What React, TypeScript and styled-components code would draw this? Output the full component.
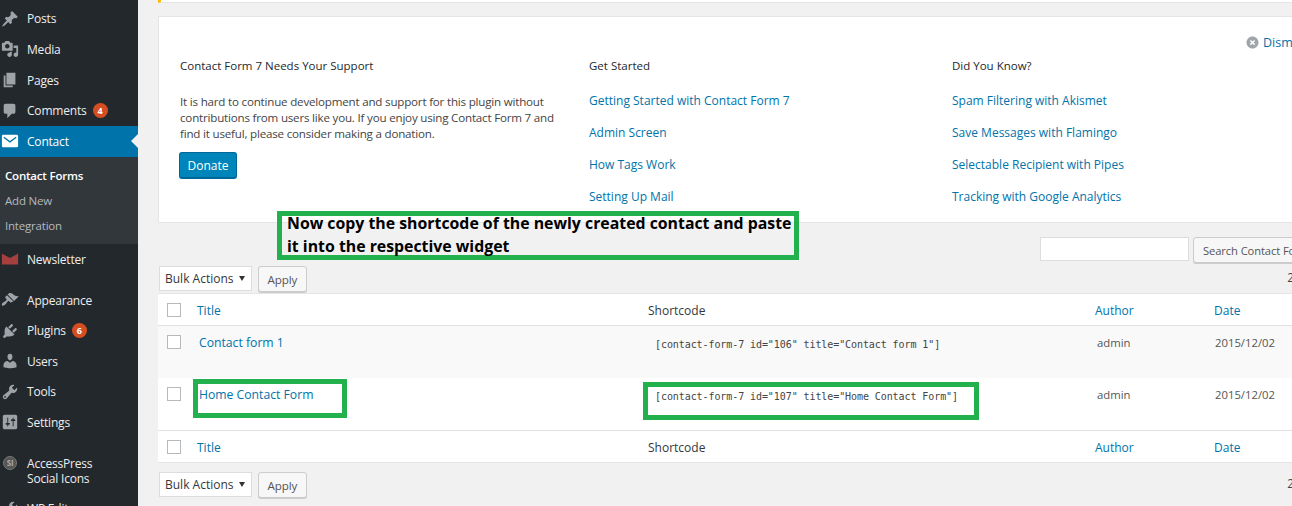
import styled, { createGlobalStyle } from "styled-components";

const ICONS: Record<string, string> = {
  posts:
    "M10.44 3.02l1.82-1.82 6.36 6.35-1.83 1.82c-1.05-.68-2.48-.57-3.41.36l-.75.75c-.92.93-1.04 2.35-.35 3.41l-1.83 1.82-2.41-2.41-2.8 2.79c-.42.42-3.38 2.71-3.8 2.29s1.86-3.39 2.28-3.81l2.79-2.79L4.1 9.36l1.83-1.82c1.05.69 2.48.57 3.4-.36l.75-.75c.93-.92 1.05-2.35.36-3.41z",
  media:
    "M13 11V4c0-.55-.45-1-1-1h-1.67L9 1H5L3.67 3H2c-.55 0-1 .45-1 1v7c0 .55.45 1 1 1h10c.55 0 1-.45 1-1zM7 4.5c1.38 0 2.5 1.12 2.5 2.5S8.38 9.5 7 9.5 4.5 8.38 4.5 7 5.62 4.5 7 4.5zM14 6h5v10.5c0 1.38-1.12 2.5-2.5 2.5S14 17.88 14 16.5s1.12-2.5 2.5-2.5c.17 0 .34.02.5.05V9h-3V6zm-4 8.05V13h2v3.5c0 1.38-1.12 2.5-2.5 2.5S7 17.88 7 16.5 8.12 14 9.5 14c.17 0 .34.02.5.05z",
  pages: "M6 15V2h10v13H6zm-1 1h8v2H3V5h2v11z",
  comments:
    "M5 2h9c1.1 0 2 .9 2 2v7c0 1.1-.9 2-2 2h-2l-5 5v-5H5c-1.1 0-2-.9-2-2V4c0-1.1.9-2 2-2z",
  contact:
    "M2.5 3h15c.8 0 1.5.7 1.5 1.5v11c0 .8-.7 1.5-1.5 1.5h-15C1.700 17 1 16.300 1 15.500v-11C1 3.700 1.700 3 2.500 3zM3.600 5.200L2.700 6.300 10 11.900l7.300-5.600-.9-1.100L10 10z",
  newsletter: "M1 4l9 5 9-5v12H1z",
  appearance:
    "M14.48 11.06L7.41 3.99l1.5-1.5c.5-.56 2.3-.47 3.51.32 1.21.8 1.43 1.28 2.91 2.1 1.18.64 2.45 1.26 4.45.85zm-.71.71L6.7 4.7 4.93 6.47c-.39.39-.39 1.02 0 1.41l1.06 1.06c.39.39.39 1.03 0 1.42-.6.6-1.43 1.11-2.21 1.69-.35.26-.7.53-1.01.84C1.43 13.23.91 14.53.93 15.17c.02.6.47 1.1 1.07 1.13.83.04 1.83-.45 3-1.62.34-.34.63-.7.9-1.06.6-.8 1.12-1.6 1.73-2.2.39-.39 1.03-.39 1.42 0l1.05 1.05c.39.39 1.02.39 1.41 0z",
  plugins:
    "M13.11 4.36L9.87 7.6 8 5.73l3.24-3.24c.35-.34 1.05-.2 1.56.32.52.51.66 1.21.31 1.55zm-8 1.77l.91-1.12 9.01 9.01-1.19.84c-.71.71-2.63 1.16-3.82 1.16H6.14L4.9 17.26c-.59.59-1.54.59-2.12 0-.59-.58-.59-1.53 0-2.12l1.24-1.24v-3.88c0-1.13.4-3.19 1.09-3.89zm7.26 3.97l3.24-3.24c.34-.35 1.04-.21 1.55.31.52.51.66 1.21.31 1.55l-3.24 3.25z",
  users:
    "M10 9.25c-2.27 0-2.73-3.44-2.73-3.44C7 4.02 7.82 2 9.97 2c2.16 0 2.98 2.02 2.71 3.81 0 0-.41 3.44-2.68 3.44zm0 2.57L12.72 10c2.39 0 4.52 2.33 4.52 4.53v2.49s-3.65 1.13-7.24 1.13c-3.65 0-7.24-1.13-7.24-1.13v-2.49c0-2.25 1.94-4.48 4.47-4.48z",
  tools:
    "M16.68 9.77c-1.34 1.34-3.3 1.67-4.95.99l-5.41 6.52c-.99.99-2.59.99-3.58 0s-.99-2.59 0-3.57l6.52-5.42c-.68-1.65-.35-3.61.99-4.95 1.28-1.28 3.12-1.62 4.72-1.06l-2.89 2.89 2.82 2.82 2.86-2.87c.53 1.58.18 3.39-1.08 4.65zM3.81 16.21c.4.39 1.04.39 1.43 0 .4-.4.4-1.04 0-1.43-.39-.4-1.03-.4-1.43 0-.39.39-.39 1.03 0 1.43z",
  settings:
    "M18 16V4c0-1.1-.9-2-2-2H4c-1.1 0-2 .9-2 2v12c0 1.1.9 2 2 2h12c1.1 0 2-.9 2-2zM8 11h1c.55 0 1 .45 1 1s-.45 1-1 1H8v1.5c0 .28-.22.5-.5.5s-.5-.22-.5-.5V13H6c-.55 0-1-.45-1-1s.45-1 1-1h1V5.500c0-.28.22-.5.5-.5s.5.22.5.5V11zm5-2h-1c-.55 0-1-.45-1-1s.45-1 1-1h1V5.500c0-.28.22-.5.5-.5s.5.22.5.5V7h1c.55 0 1 .45 1 1s-.45 1-1 1h-1v5.500c0 .28-.22.5-.5.5s-.5-.22-.5-.5V9z",
  dismiss:
    "M10 2c4.420 0 8 3.580 8 8s-3.580 8-8 8-8-3.580-8-8 3.580-8 8-8zm3.500 10.100L11.400 10l2.100-2.100-1.400-1.400L10 8.600 7.900 6.500 6.500 7.900 8.600 10l-2.100 2.100 1.400 1.400 2.100-2.100 2.100 2.100z",
};

const Icon = ({ name, size = 20, color }: { name: string; size?: number; color: string }) => (
  <svg width={size} height={size} viewBox="0 0 20 20" fill={color} fillRule="evenodd">
    <path d={ICONS[name]} />
  </svg>
);

const GREY = "#9ea3a8";

const App = () => {
  return (
    <Page>
      <GlobalStyle />
      <Sidebar>
        <MenuRow>
          <IconSlot><Icon name="posts" color={GREY} /></IconSlot>
          Posts
        </MenuRow>
        <MenuRow>
          <IconSlot><Icon name="media" color={GREY} /></IconSlot>
          Media
        </MenuRow>
        <MenuRow>
          <IconSlot><Icon name="pages" color={GREY} /></IconSlot>
          Pages
        </MenuRow>
        <MenuRow>
          <IconSlot><Icon name="comments" color={GREY} /></IconSlot>
          Comments
          <Badge>4</Badge>
        </MenuRow>
        <MenuRow $active>
          <IconSlot><Icon name="contact" color="#fff" /></IconSlot>
          Contact
          <ActiveArrow />
        </MenuRow>
        <SubMenu>
          <SubRow $current>Contact Forms</SubRow>
          <SubRow>Add New</SubRow>
          <SubRow>Integration</SubRow>
        </SubMenu>
        <MenuRow>
          <IconSlot><Icon name="newsletter" color="#a5403f" /></IconSlot>
          Newsletter
        </MenuRow>
        <MenuGap />
        <MenuRow>
          <IconSlot><Icon name="appearance" color={GREY} /></IconSlot>
          Appearance
        </MenuRow>
        <MenuRow>
          <IconSlot><Icon name="plugins" color={GREY} /></IconSlot>
          Plugins
          <Badge>6</Badge>
        </MenuRow>
        <MenuRow>
          <IconSlot><Icon name="users" color={GREY} /></IconSlot>
          Users
        </MenuRow>
        <MenuRow>
          <IconSlot><Icon name="tools" color={GREY} /></IconSlot>
          Tools
        </MenuRow>
        <MenuRow>
          <IconSlot><Icon name="settings" color={GREY} /></IconSlot>
          Settings
        </MenuRow>
        <TallRow>
          <IconSlot><LogoCircle>SI</LogoCircle></IconSlot>
          <span>
            AccessPress
            <br />
            Social Icons
          </span>
        </TallRow>
        <MenuRow>
          <IconSlot><Icon name="tools" color={GREY} /></IconSlot>
          WP Editor
        </MenuRow>
      </Sidebar>

      <Main>
        <Content>
          <NoticeStrip />
          <WelcomePanel>
            <DismissLink>
              <Icon name="dismiss" size={15} color="#a0a5aa" />
              Dismiss
            </DismissLink>
            <PanelColumn>
              <PanelTitle>Contact Form 7 Needs Your Support</PanelTitle>
              <PanelText>
                It is hard to continue development and support for this plugin without
                contributions from users like you. If you enjoy using Contact Form 7 and
                find it useful, please consider making a donation.
              </PanelText>
              <DonateButton>Donate</DonateButton>
            </PanelColumn>
            <PanelColumn>
              <PanelTitle>Get Started</PanelTitle>
              <LinkList>
                <PanelLink>Getting Started with Contact Form 7</PanelLink>
                <PanelLink>Admin Screen</PanelLink>
                <PanelLink>How Tags Work</PanelLink>
                <PanelLink>Setting Up Mail</PanelLink>
              </LinkList>
            </PanelColumn>
            <PanelColumn>
              <PanelTitle>Did You Know?</PanelTitle>
              <LinkList>
                <PanelLink>Spam Filtering with Akismet</PanelLink>
                <PanelLink>Save Messages with Flamingo</PanelLink>
                <PanelLink>Selectable Recipient with Pipes</PanelLink>
                <PanelLink>Tracking with Google Analytics</PanelLink>
              </LinkList>
            </PanelColumn>
          </WelcomePanel>

          <SearchRow>
            <SearchInput />
            <SearchButton>Search Contact Form</SearchButton>
          </SearchRow>

          <ActionsRow>
            <BulkSelect>
              Bulk Actions
              <Caret />
            </BulkSelect>
            <ApplyButton>Apply</ApplyButton>
            <ItemCount>2 items</ItemCount>
          </ActionsRow>

          <ListTable>
            <HeadRow $top>
              <CheckCell><CheckBox /></CheckCell>
              <Cell><HeadLink>Title</HeadLink></Cell>
              <Cell>Shortcode</Cell>
              <Cell><HeadLink>Author</HeadLink></Cell>
              <Cell><HeadLink>Date</HeadLink></Cell>
            </HeadRow>
            <DataRow $striped>
              <CheckCell><CheckBox /></CheckCell>
              <Cell $indent={2}><RowTitle>Contact form 1</RowTitle></Cell>
              <Cell $indent={7}><Code>[contact-form-7 id="106" title="Contact form 1"]</Code></Cell>
              <Cell $indent={2}>admin</Cell>
              <Cell $indent={1}>2015/12/02</Cell>
            </DataRow>
            <DataRow>
              <CheckCell><CheckBox /></CheckCell>
              <Cell $indent={2}><RowTitle>Home Contact Form</RowTitle></Cell>
              <Cell $indent={7}><Code>[contact-form-7 id="107" title="Home Contact Form"]</Code></Cell>
              <Cell $indent={2}>admin</Cell>
              <Cell $indent={1}>2015/12/02</Cell>
            </DataRow>
            <HeadRow>
              <CheckCell><CheckBox /></CheckCell>
              <Cell><HeadLink>Title</HeadLink></Cell>
              <Cell>Shortcode</Cell>
              <Cell><HeadLink>Author</HeadLink></Cell>
              <Cell><HeadLink>Date</HeadLink></Cell>
            </HeadRow>
          </ListTable>

          <BottomActions>
            <BulkSelect>
              Bulk Actions
              <Caret />
            </BulkSelect>
            <ApplyButton>Apply</ApplyButton>
            <ItemCount>2 items</ItemCount>
          </BottomActions>
        </Content>
      </Main>

      {/* 스크린샷 위에 그려진 초록색 주석 박스 */}
      <NoteBox>
        <NoteText>
          Now copy the shortcode of the newly created contact and paste it into the respective widget
        </NoteText>
      </NoteBox>
      <TitleMark />
      <CodeMark />
    </Page>
  );
};

export default App;

const GlobalStyle = createGlobalStyle`
  html, body {
    margin: 0;
    height: 100%;
    overflow: hidden;
    background: #f1f1f1;
  }
  * {
    box-sizing: border-box;
  }
`;

const Page = styled.div`
  position: relative;
  display: flex;
  width: 1292px;
  height: 506px;
  overflow: hidden;
  font-family: "Open Sans", "Liberation Sans", sans-serif;
  font-size: 13px;
  color: #444;
  background: #f1f1f1;
`;

const Sidebar = styled.nav`
  flex: 0 0 138px;
  padding-top: 3.55px;
  background: #23282d;
  color: #eee;
  font-size: 12px;
  letter-spacing: -0.2px;
  overflow: hidden;
`;

const MenuRow = styled.div<{ $active?: boolean }>`
  position: relative;
  display: flex;
  align-items: center;
  height: 30.6px;
  white-space: nowrap;
  background: ${(p) => (p.$active ? "#0073aa" : "transparent")};
  color: ${(p) => (p.$active ? "#fff" : "#eee")};
`;

const TallRow = styled(MenuRow)`
  align-items: flex-start;
  height: 46px;
  margin-top: 10px;
  padding-top: 8px;
  line-height: 15.5px;
`;

const MenuGap = styled.div`
  height: 10px;
`;

const IconSlot = styled.span`
  flex: 0 0 27px;
  display: flex;
  justify-content: center;
  padding-right: 7px;
  svg {
    display: block;
    width: 18px;
    height: 18px;
  }
`;

const LogoCircle = styled.span`
  display: flex;
  align-items: center;
  justify-content: center;
  width: 14px;
  height: 14px;
  border-radius: 50%;
  border: 1px solid #777;
  background: #555;
  color: #aaa;
  font-size: 8px;
  font-weight: 700;
`;

const Badge = styled.span`
  display: inline-flex;
  align-items: center;
  justify-content: center;
  width: 15px;
  height: 15px;
  margin-left: 6px;
  border-radius: 50%;
  background: #d54e21;
  color: #fff;
  font-size: 9px;
  font-weight: 700;
`;

const ActiveArrow = styled.span`
  position: absolute;
  right: 0;
  top: 50%;
  margin-top: -7px;
  border: 7px solid transparent;
  border-left-width: 0;
  border-right-color: #f1f1f1;
`;

const SubMenu = styled.div`
  height: 87.6px;
  padding-top: 6.3px;
  background: #32373c;
`;

const SubRow = styled.div<{ $current?: boolean }>`
  height: 25px;
  line-height: 25px;
  padding-left: 5px;
  font-size: 11.5px;
  font-weight: ${(p) => (p.$current ? 600 : 400)};
  color: ${(p) => (p.$current ? "#fff" : "#b4b9be")};
`;

const Main = styled.main`
  flex: 1 1 auto;
  min-width: 0;
  padding-left: 20px;
  overflow: hidden;
`;

const Content = styled.div`
  width: 1170px;
`;

const NoticeStrip = styled.div`
  height: 3px;
  margin-bottom: 13px;
  background: #fff;
  border-left: 3px solid #ffb900;
  border-bottom: 1px solid #e5e5e5;
`;

const WelcomePanel = styled.section`
  position: relative;
  display: grid;
  grid-template-columns: 409px 363px 1fr;
  height: 207px;
  padding: 40px 0 0 21px;
  background: #fff;
  border: 1px solid #e5e5e5;
`;

const DismissLink = styled.span`
  position: absolute;
  left: 1086px;
  top: 17px;
  display: flex;
  align-items: center;
  gap: 3px;
  color: #0073aa;
  font-size: 12.5px;
`;

const PanelColumn = styled.div`
  display: flex;
  flex-direction: column;
  align-items: flex-start;
`;

const PanelTitle = styled.h3`
  margin: 0 0 18px;
  font-size: 11.5px;
  line-height: 18px;
  font-weight: 500;
  color: #23282d;
`;

const PanelText = styled.p`
  width: 385px;
  margin: 1px 0 10px;
  font-size: 11.6px;
  letter-spacing: -0.2px;
  line-height: 16px;
  color: #444;
`;

const DonateButton = styled.button`
  height: 27px;
  width: 58px;
  padding: 0;
  margin-left: -1px;
  border: 1px solid #006799;
  border-bottom-width: 2px;
  border-radius: 3px;
  background: #0085ba;
  color: #fff;
  font: inherit;
  font-size: 12px;
`;

const LinkList = styled.div`
  display: flex;
  flex-direction: column;
  gap: 16px;
`;

const PanelLink = styled.a`
  font-size: 12px;
  line-height: 16px;
  color: #0073aa;
`;

const SearchRow = styled.div`
  display: flex;
  justify-content: flex-end;
  gap: 4px;
  height: 26px;
  margin: 14px -2px 3px 0;
`;

const SearchInput = styled.input`
  width: 149px;
  height: 24px;
  border: 1px solid #ddd;
  background: #fff;
`;

const GreyButton = styled.button`
  height: 26px;
  padding: 0 9px;
  border: 1px solid #ccc;
  border-radius: 3px;
  box-shadow: 0 1px 0 #ccc;
  background: #f7f7f7;
  color: #555;
  font: inherit;
  font-size: 12px;
  white-space: nowrap;
`;

const SearchButton = styled(GreyButton)`
  width: 137px;
  text-align: left;
  font-size: 11.2px;
  letter-spacing: -0.1px;
`;

const ApplyButton = styled(GreyButton)`
  padding: 0 8.5px;
  font-size: 11.6px;
  letter-spacing: -0.1px;
`;

const ActionsRow = styled.div`
  display: flex;
  align-items: flex-start;
  height: 27px;
  gap: 6px;
  padding-left: 1px;
`;

const BottomActions = styled(ActionsRow)`
  margin-top: 9px;
`;

const BulkSelect = styled.div`
  display: flex;
  align-items: center;
  justify-content: space-between;
  width: 93px;
  height: 25px;
  padding: 0 6px 0 5px;
  border: 1px solid #ddd;
  background: #fff;
  color: #32373c;
  font-size: 12px;
`;

const Caret = styled.span`
  border: 3.5px solid transparent;
  border-top: 5px solid #333;
  border-bottom-width: 0;
`;

const ItemCount = styled.span`
  margin-left: auto;
  margin-top: 3px;
  font-size: 12px;
`;

const ListTable = styled.div`
  border: 1px solid #e5e5e5;
  background: #fff;
  border-left-width: 0;
`;

const columns = "39px 451px 447px 119px 1fr";

const HeadRow = styled.div<{ $top?: boolean }>`
  display: grid;
  grid-template-columns: ${columns};
  height: 32px;
  padding-top: 1px;
  align-items: center;
  font-size: 12px;
  color: #32373c;
  ${(p) => (p.$top ? "border-bottom" : "border-top")}: 1px solid #e1e1e1;
`;

const DataRow = styled.div<{ $striped?: boolean }>`
  display: grid;
  grid-template-columns: ${columns};
  height: 52px;
  padding-top: 9px;
  font-size: 11.3px;
  line-height: 16px;
  color: #555;
  background: ${(p) => (p.$striped ? "#f9f9f9" : "#fff")};
`;

const Cell = styled.div<{ $indent?: number }>`
  padding-left: ${(p) => p.$indent ?? 0}px;
  white-space: nowrap;
`;

const CheckCell = styled.div`
  padding-left: 9px;
  display: flex;
  align-items: flex-start;
  ${HeadRow} & {
    align-items: center;
  }
`;

const CheckBox = styled.span`
  display: block;
  width: 14px;
  height: 14px;
  border: 1px solid #b4b9be;
  background: #fff;
`;

const HeadLink = styled.a`
  color: #0073aa;
`;

const RowTitle = styled.a`
  font-size: 12.2px;
  font-weight: 500;
  color: #0073aa;
`;

const Code = styled.code`
  font-family: "DejaVu Sans Mono", "Liberation Mono", monospace;
  font-size: 10px;
  letter-spacing: -0.08px;
  color: #444;
  position: relative;
  top: 1px;
`;

const NoteBox = styled.div`
  position: absolute;
  left: 277px;
  top: 211px;
  width: 522px;
  height: 49px;
  padding-left: 5px;
  border: 5px solid #22b14c;
  color: #000;
`;

const NoteText = styled.p`
  margin: -4px 0 0;
  font-size: 15.85px;
  font-weight: 700;
  line-height: 23px;
`;

const TitleMark = styled.div`
  position: absolute;
  left: 193px;
  top: 379px;
  width: 154px;
  height: 39px;
  border: 5px solid #22b14c;
`;

const CodeMark = styled.div`
  position: absolute;
  left: 643px;
  top: 382px;
  width: 336px;
  height: 38px;
  border: 5px solid #22b14c;
`;
